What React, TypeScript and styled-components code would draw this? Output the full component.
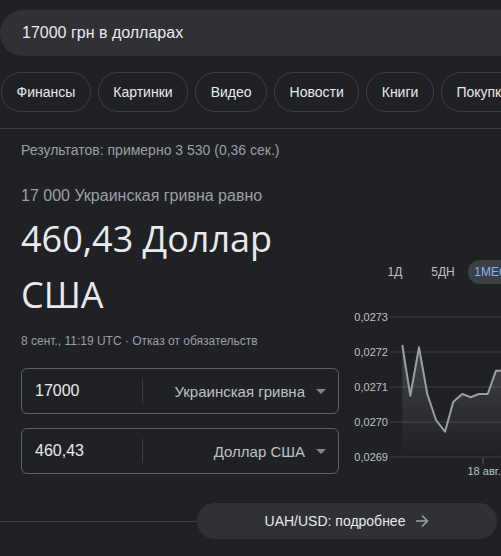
import React from "react";
import styled, { createGlobalStyle } from "styled-components";

const Global = createGlobalStyle`
  html, body { margin: 0; padding: 0; background: #202124; }
  body { overflow: hidden; font-family: "Liberation Sans", Arial, sans-serif; }
  * { box-sizing: border-box; }
`;

const Page = styled.div`
  width: 501px;
  height: 556px;
  overflow: hidden;
  background: #202124;
  color: #e8eaed;
`;

const SearchBar = styled.div`
  margin-top: 10px;
  width: 720px;
  height: 46px;
  border-radius: 23px;
  background: #303134;
  display: flex;
  align-items: center;
  padding-left: 22px;
  font-size: 16px;
  color: #e8eaed;
`;

const ChipRow = styled.div`
  margin-top: 16px;
  display: flex;
  gap: 7px;
  padding-left: 1px;
  width: 720px;
`;

const Chip = styled.div`
  height: 40px;
  flex: none;
  display: flex;
  align-items: center;
  padding: 0 14.5px;
  border: 1px solid #3c4043;
  border-radius: 20px;
  font-size: 14px;
  color: #e8eaed;
`;

const Divider = styled.div`
  margin-top: 16px;
  height: 1px;
  background: #3c4043;
`;

const Main = styled.div`
  display: flex;
  align-items: flex-start;
  padding: 11px 0 0 21px;
`;

const LeftCol = styled.div`
  width: 318px;
  flex: none;
  display: flex;
  flex-direction: column;
`;

const Muted = styled.div<{ $size: number; $lh: number; $mt?: number }>`
  font-size: ${(p) => p.$size}px;
  line-height: ${(p) => p.$lh}px;
  margin-top: ${(p) => p.$mt ?? 0}px;
  color: #9aa0a6;
  white-space: nowrap;
`;

const BigValue = styled.div`
  margin-top: 3px;
  font-family: "Open Sans", "Liberation Sans", sans-serif;
  font-size: 36px;
  line-height: 56px;
  color: #e8eaed;
`;

const InputBox = styled.div<{ $mt: number }>`
  margin-top: ${(p) => p.$mt}px;
  height: 46px;
  border: 1px solid #5f6368;
  border-radius: 6px;
  display: flex;
  align-items: center;
`;

const Amount = styled.div`
  width: 120px;
  padding-left: 13px;
  font-size: 16px;
  color: #e8eaed;
`;

const VSep = styled.div`
  width: 1px;
  height: 24px;
  background: #3c4043;
`;

const Currency = styled.div`
  flex: 1;
  display: flex;
  justify-content: flex-end;
  align-items: center;
  gap: 11px;
  padding-right: 12px;
  font-size: 15px;
  color: #bdc1c6;
`;

const Caret = styled.span`
  width: 0;
  height: 0;
  border-left: 5px solid transparent;
  border-right: 5px solid transparent;
  border-top: 5px solid #80868b;
`;

const RightCol = styled.div`
  flex: none;
  margin-left: 7px;
  padding-top: 120px;
  width: 300px;
`;

const Tabs = styled.div`
  display: flex;
  gap: 2px;
  padding-left: 26px;
`;

const Tab = styled.div<{ $active?: boolean }>`
  width: 46px;
  height: 24px;
  border-radius: 12px;
  display: flex;
  align-items: center;
  justify-content: center;
  font-size: 12px;
  color: ${(p) => (p.$active ? "#8ab4f8" : "#bdc1c6")};
  background: ${(p) => (p.$active ? "#3c4043" : "transparent")};
`;

const ChartSvg = styled.svg`
  display: block;
  margin-top: 16px;
  overflow: visible;
`;

const BottomRow = styled.div`
  margin-top: 25px;
  display: flex;
  align-items: center;
  padding-right: 4px;
`;

const HLine = styled.div`
  flex: 1;
  height: 1px;
  background: #3c4043;
`;

const MoreButton = styled.div`
  width: 300px;
  height: 36px;
  border-radius: 18px;
  background: #303134;
  display: flex;
  align-items: center;
  justify-content: center;
  gap: 10px;
  font-size: 14px;
  color: #e8eaed;
`;

const chips = ["Финансы", "Картинки", "Видео", "Новости", "Книги", "Покупки", "Карты"];

const pts: [number, number][] = [
  [402.3, 345], [410.3, 395.7], [419, 347.3], [427.3, 394], [436, 420],
  [445, 431.7], [453.3, 401.7], [462.3, 394], [470.7, 397.3], [479, 394],
  [487.7, 394], [496, 370.7], [510, 370.7],
];

const OX = 346;
const OY = 300;

function Chart() {
  const p = pts.map(([x, y]) => [x - OX, y - OY]);
  const line = p.map(([x, y], i) => `${i ? "L" : "M"}${x.toFixed(1)} ${y.toFixed(1)}`).join(" ");
  const area = `${line} L${p[p.length - 1][0]} 157 L${p[0][0]} 157 Z`;
  const grid = [
    { y: 17, t: "0,0273" },
    { y: 52, t: "0,0272" },
    { y: 87, t: "0,0271" },
    { y: 122, t: "0,0270" },
    { y: 157, t: "0,0269" },
  ];
  return (
    <ChartSvg width={200} height={178} viewBox="0 0 200 178">
      <defs>
        <linearGradient id="fillg" x1="0" y1="0" x2="0" y2="1">
          <stop offset="0" stopColor="#9aa0a6" stopOpacity="0.28" />
          <stop offset="1" stopColor="#9aa0a6" stopOpacity="0" />
        </linearGradient>
      </defs>
      {grid.map((g) => (
        <g key={g.t}>
          <line x1={44} x2={200} y1={g.y} y2={g.y} stroke="#3c4043" strokeWidth={1} />
          <text
            x={42}
            y={g.y + 4}
            textAnchor="end"
            fontSize={11}
            fill="#bdc1c6"
            fontFamily='"Liberation Sans", Arial, sans-serif'
          >
            {g.t}
          </text>
        </g>
      ))}
      <path d={area} fill="url(#fillg)" />
      <path d={line} fill="none" stroke="#9aa0a6" strokeWidth={2} strokeLinejoin="round" />
      <line x1={137} x2={137} y1={158} y2={164} stroke="#5f6368" strokeWidth={1} />
      <text
        x={138}
        y={175}
        textAnchor="middle"
        fontSize={11}
        fill="#bdc1c6"
        fontFamily='"Liberation Sans", Arial, sans-serif'
      >
        18 авг.
      </text>
    </ChartSvg>
  );
}

export default function App() {
  return (
    <Page>
      <Global />
      <SearchBar>17000 грн в долларах</SearchBar>
      <ChipRow>
        {chips.map((c) => (
          <Chip key={c}>{c}</Chip>
        ))}
      </ChipRow>
      <Divider />
      <Main>
        <LeftCol>
          <Muted $size={14} $lh={20}>Результатов: примерно 3 530 (0,36 сек.)</Muted>
          <Muted $size={16} $lh={24} $mt={24}>17 000 Украинская гривна равно</Muted>
          <BigValue>
            460,43 Доллар
            <br />
            США
          </BigValue>
          <Muted $size={12} $lh={16} $mt={10}>8 сент., 11:19 UTC · Отказ от обязательств</Muted>
          <InputBox $mt={19}>
            <Amount>17000</Amount>
            <VSep />
            <Currency>
              Украинская гривна <Caret />
            </Currency>
          </InputBox>
          <InputBox $mt={14}>
            <Amount>460,43</Amount>
            <VSep />
            <Currency>
              Доллар США <Caret />
            </Currency>
          </InputBox>
        </LeftCol>
        <RightCol>
          <Tabs>
            <Tab>1Д</Tab>
            <Tab>5ДН</Tab>
            <Tab $active>1МЕС</Tab>
          </Tabs>
          <Chart />
        </RightCol>
      </Main>
      <BottomRow>
        <HLine />
        <MoreButton>
          UAH/USD: подробнее
          <svg width="14" height="14" viewBox="0 0 14 14" fill="none" stroke="#9aa0a6" strokeWidth="1.6">
            <path d="M1 7h11.5M7 1.5L12.5 7 7 12.5" />
          </svg>
        </MoreButton>
      </BottomRow>
    </Page>
  );
}
